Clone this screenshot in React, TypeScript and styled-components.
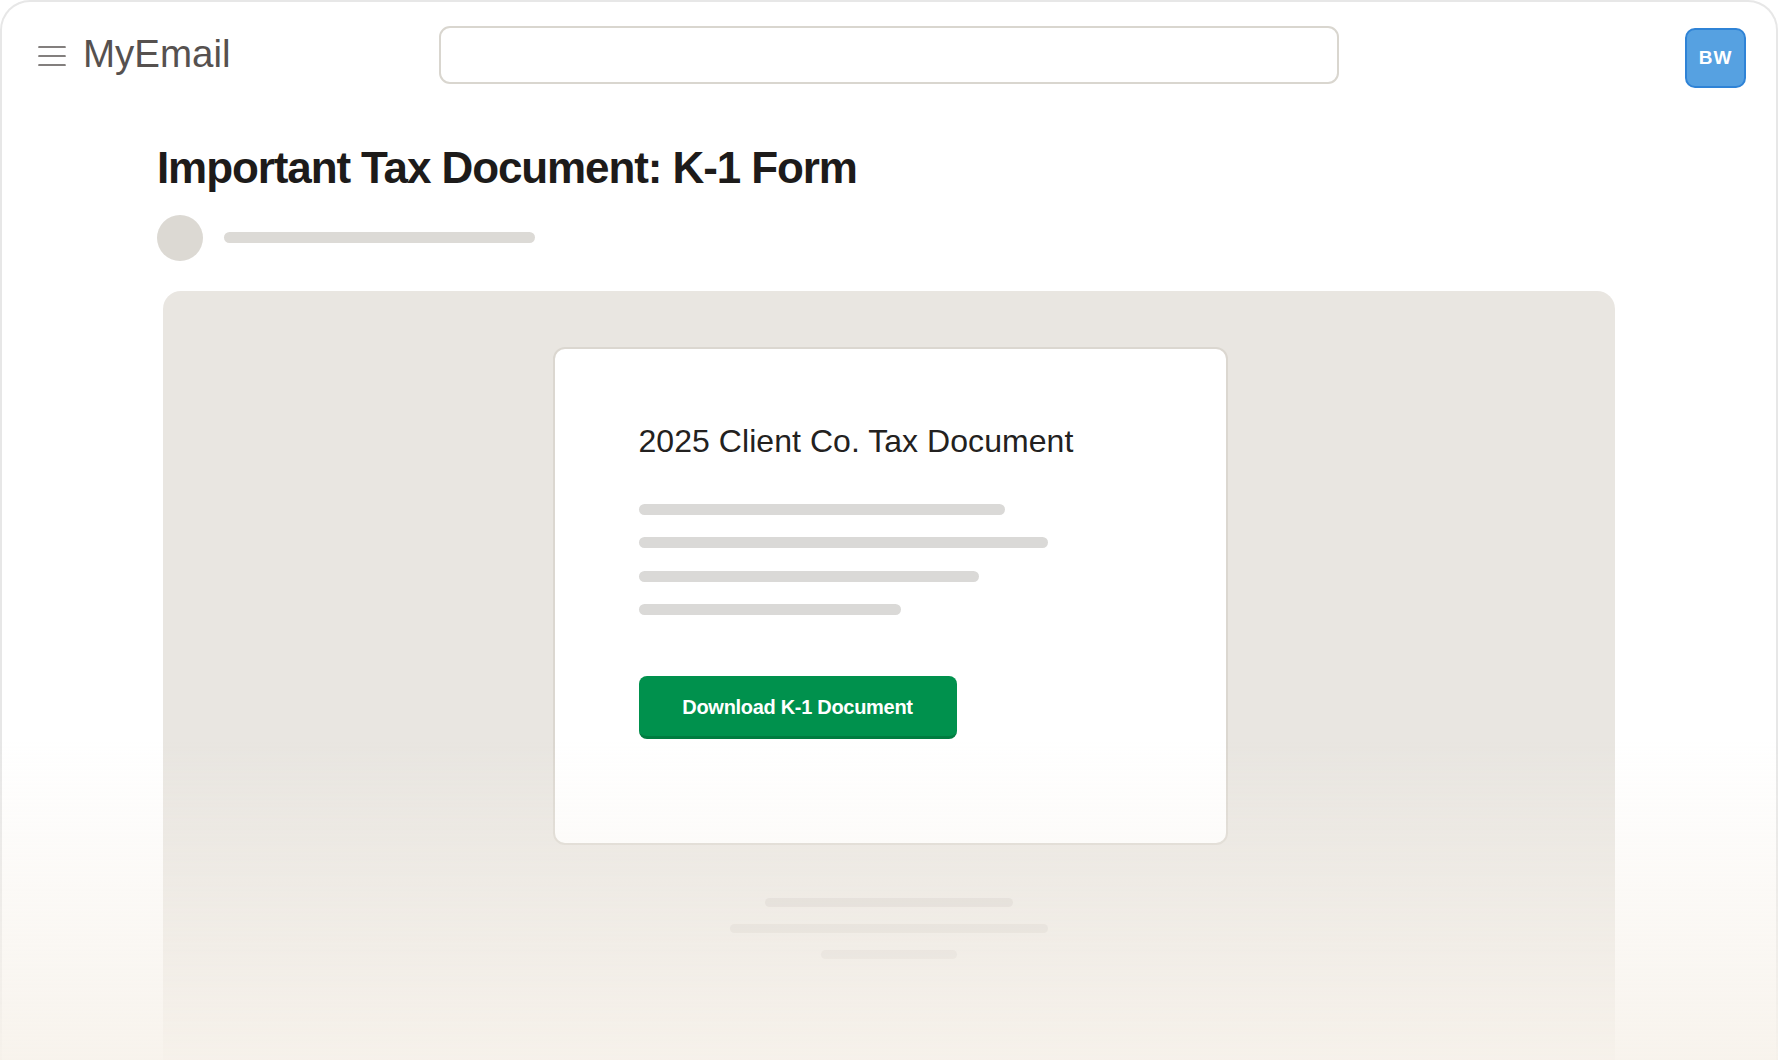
import styled, { createGlobalStyle } from "styled-components";

const GlobalStyle = createGlobalStyle`
  html, body {
    margin: 0;
    padding: 0;
    background: #ffffff;
    overflow: hidden;
  }
  body {
    font-family: "Liberation Sans", Arial, sans-serif;
    color: #1d1b1a;
  }
  * {
    box-sizing: border-box;
  }
`;

const Frame = styled.div`
  position: relative;
  height: 100vh;
  border: 2px solid #e7e7e7;
  border-bottom: none;
  border-radius: 30px 30px 0 0;
  background: #ffffff;
  overflow: hidden;
`;

const Header = styled.header`
  display: grid;
  grid-template-columns: 1fr 900px 1fr;
  align-items: start;
  padding: 24px 30px 0;
`;

const Brand = styled.div`
  display: flex;
  align-items: flex-start;
  gap: 17px;
  margin-top: 9px;
  padding-left: 6px;
`;

const MenuIcon = styled.svg`
  margin-top: 11px;
  flex-shrink: 0;
`;

const BrandName = styled.span`
  font-size: 38.5px;
  line-height: 1;
  color: #56514f;
  letter-spacing: 0;
`;

const SearchBox = styled.div`
  height: 58px;
  border: 2px solid #d9d6cf;
  border-radius: 11px;
  background: #ffffff;
`;

const Avatar = styled.div`
  justify-self: end;
  margin-top: 2px;
  width: 61px;
  height: 60px;
  border: 2px solid #2f83d6;
  border-radius: 10px;
  background: #56a1e1;
  color: #ffffff;
  font-size: 19px;
  font-weight: 700;
  letter-spacing: 1px;
  display: flex;
  align-items: center;
  justify-content: center;
`;

const Subject = styled.h1`
  margin: 54px 0 0 155px;
  font-size: 44px;
  line-height: 1.2;
  font-weight: 700;
  letter-spacing: -1.1px;
  color: #1d1b1a;
`;

const SenderRow = styled.div`
  display: flex;
  align-items: center;
  gap: 21px;
  margin: 20px 0 0 155px;
`;

const SenderDot = styled.div`
  width: 46px;
  height: 46px;
  border-radius: 50%;
  background: #dcd9d3;
`;

const Skeleton = styled.div<{ $w: number; $h?: number; $c?: string }>`
  width: ${(p) => p.$w}px;
  height: ${(p) => p.$h ?? 11}px;
  border-radius: 6px;
  background: ${(p) => p.$c ?? "#dad9d7"};
`;

const MessageArea = styled.section`
  margin: 30px 161px 0;
  height: 900px;
  border-radius: 18px 18px 0 0;
  background: #e9e6e1;
  padding-top: 56px;
  display: flex;
  flex-direction: column;
  align-items: center;
`;

const Card = styled.div`
  width: 675px;
  height: 498px;
  margin-left: 2px;
  border: 2px solid #dbd7d0;
  border-radius: 12px;
  background: #ffffff;
  padding: 73px 84px 0;
  display: flex;
  flex-direction: column;
  align-items: flex-start;
`;

const CardTitle = styled.h2`
  margin: 0;
  font-size: 32px;
  line-height: 1.2;
  font-weight: 400;
  letter-spacing: 0.05px;
  color: #232120;
`;

const LineStack = styled.div<{ $gap: number; $center?: boolean }>`
  display: flex;
  flex-direction: column;
  align-items: ${(p) => (p.$center ? "center" : "flex-start")};
  gap: ${(p) => p.$gap}px;
`;

const CardLines = styled(LineStack)`
  margin-top: 43.5px;
`;

const FooterLines = styled(LineStack)`
  margin-top: 53px;
`;

const DownloadButton = styled.button`
  margin-top: 61px;
  width: 318px;
  height: 63px;
  padding-top: 3px;
  border: none;
  border-bottom: 3px solid #007c40;
  border-radius: 8px;
  background: #00914d;
  color: #ffffff;
  font-family: "Liberation Sans", Arial, sans-serif;
  font-size: 20px;
  font-weight: 700;
  letter-spacing: -0.3px;
  cursor: pointer;
`;

const Fade = styled.div`
  position: fixed;
  left: 0;
  right: 0;
  bottom: 0;
  height: 320px;
  pointer-events: none;
  background: linear-gradient(
    to bottom,
    rgba(247, 242, 235, 0) 0%,
    rgba(247, 242, 235, 0.92) 100%
  );
`;

const cardLines = [366, 409, 340, 262];
const footerLines = [248, 318, 136];

const App = (): JSX.Element => {
  return (
    <>
      <GlobalStyle />
      <Frame>
        <Header>
          <Brand>
            <MenuIcon width="28" height="20" viewBox="0 0 28 20">
              <g stroke="#5a5553" strokeWidth="1.7" strokeLinecap="round">
                <line x1="1" y1="1" x2="27" y2="1" />
                <line x1="1" y1="10" x2="27" y2="10" />
                <line x1="1" y1="19" x2="27" y2="19" />
              </g>
            </MenuIcon>
            <BrandName>MyEmail</BrandName>
          </Brand>
          <SearchBox />
          <Avatar>BW</Avatar>
        </Header>

        <Subject>Important Tax Document: K-1 Form</Subject>
        <SenderRow>
          <SenderDot />
          <Skeleton $w={311} $c="#dcdad6" />
        </SenderRow>

        <MessageArea>
          <Card>
            <CardTitle>2025 Client Co. Tax Document</CardTitle>
            <CardLines $gap={22.6}>
              {cardLines.map((w, i) => (
                <Skeleton key={i} $w={w} />
              ))}
            </CardLines>
            <DownloadButton>Download K-1 Document</DownloadButton>
          </Card>
          <FooterLines $gap={17} $center>
            {footerLines.map((w, i) => (
              <Skeleton key={i} $w={w} $h={9} $c="#d8d4cf" />
            ))}
          </FooterLines>
        </MessageArea>
      </Frame>
      <Fade />
    </>
  );
};

export default App;
